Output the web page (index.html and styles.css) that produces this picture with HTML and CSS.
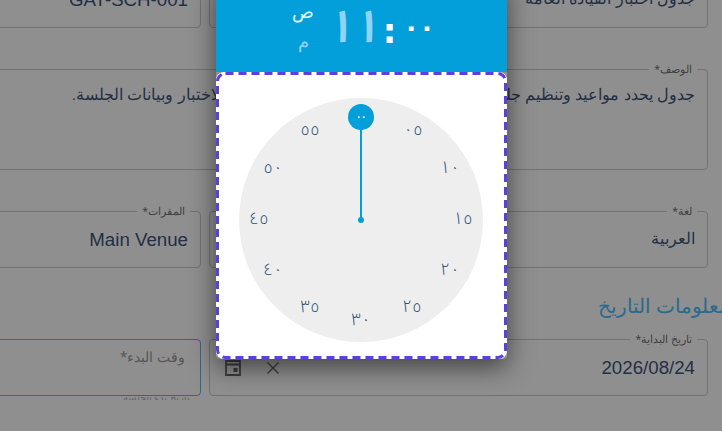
FILE: index.html
```html
<!DOCTYPE html>
<html lang="ar" dir="rtl">
<head>
<meta charset="utf-8">
<title>وقت البدء</title>
<link rel="stylesheet" href="styles.css">
</head>
<body>
<div class="page">
  <form class="form">
    <div class="field"><span class="value ar">جدول اختبار القيادة العامة</span></div>
    <div class="field"><span class="value">GAT-SCH-001</span></div>
    <div class="field wide desc">
      <span class="label">الوصف*</span>
      <span class="value ar">جدول يحدد مواعيد وتنظيم جلسات الاختبار لضمان حسن سير جيد لعملية الاختبار وبيانات الجلسة.</span>
    </div>
    <div class="field"><span class="label">لغة*</span><span class="value ar">العربية</span></div>
    <div class="field"><span class="label">المقرات*</span><span class="value">Main Venue</span></div>
    <h2 class="section wide">معلومات التاريخ</h2>
    <div class="field after-section">
      <span class="label">تاريخ البداية*</span><span class="value">2026/08/24</span>
      <span class="field-icons">
        <svg class="icon" viewBox="0 0 18 18" width="18" height="18"><path d="M2 2h14v14h-14z M2 5.5h14" fill="none" stroke="#3c3c3c" stroke-width="1.8"/><rect x="9.5" y="9" width="4" height="4" fill="#3c3c3c"/></svg>
        <svg class="icon" viewBox="0 0 18 18" width="18" height="18"><path d="M3.5 3.5l11 11M14.5 3.5l-11 11" fill="none" stroke="#3c3c3c" stroke-width="1.4"/></svg>
      </span>
    </div>
    <div class="field focus after-section"><span class="placeholder">وقت البدء*</span><span class="hint">تاريخ بدء الجلسة</span></div>
  </form>

  <div class="picker">
    <div class="picker-head">
      <div class="time"><span class="hours">١١</span><span class="sep">:</span><span class="mins">٠٠</span></div>
      <div class="ampm"><span class="on">ص</span><span class="off">م</span></div>
    </div>
    <div class="picker-body">
      <svg class="dashes" viewBox="0 0 291 287" width="291" height="287"><rect x="1.5" y="1.5" width="288" height="284" rx="8" fill="none" stroke="#5b3fe0" stroke-width="3" stroke-dasharray="8 5"/></svg>
      <div class="clock">
        <span class="hand"></span><span class="pivot"></span>
        <span class="knob">٠٠</span>
        <span class="num n05">٠٥</span>
        <span class="num n10">١٠</span>
        <span class="num n15">١٥</span>
        <span class="num n20">٢٠</span>
        <span class="num n25">٢٥</span>
        <span class="num n30">٣٠</span>
        <span class="num n35">٣٥</span>
        <span class="num n40">٤٠</span>
        <span class="num n45">٤٥</span>
        <span class="num n50">٥٠</span>
        <span class="num n55">٥٥</span>
      </div>
    </div>
  </div>
</div>
</body>
</html>
```
FILE: styles.css
```css
* { box-sizing: border-box; }
html, body { margin: 0; height: 100%; overflow: hidden; background: #8f8f8f; }
body { font-family: "Liberation Sans", Arial, sans-serif; color: #1f2f45; }

.page { position: relative; width: 722px; height: 431px; overflow: hidden; background: #8f8f8f; }

.form {
  position: absolute;
  top: -29px;
  right: 14px;
  width: 1015px;
  display: grid;
  grid-template-columns: 499px 499px;
  column-gap: 8px;
  row-gap: 41px;
  align-content: start;
}

.field {
  position: relative;
  height: 57px;
  border: 1px solid #727272;
  border-radius: 4px;
  display: flex;
  align-items: center;
  padding: 0 12px;
}
.after-section { margin-top: -11px; }
.wide { grid-column: 1 / -1; }
.desc { height: 101px; align-items: flex-start; padding-top: 15px; }
.value { font-size: 18.7px; line-height: 24px; white-space: nowrap; color: #1f2f45; }
.value.ar { font-size: 15.5px; margin-top: -2px; }
.label {
  position: absolute;
  top: -7px;
  right: 10px;
  padding: 0 5px;
  font-family: "Noto Sans", sans-serif;
  font-size: 10.5px;
  line-height: 12px;
  color: #3f3f3f;
  background: #8f8f8f;
}
.section {
  height: 0;
  margin: -15px -22px 15px 0;
  font-family: "Noto Sans", sans-serif;
  font-weight: 400;
  font-size: 19.5px;
  line-height: 24px;
  color: #2a6a8c;
}
.field-icons {
  position: absolute;
  left: 14px;
  top: 19px;
  display: flex;
  gap: 22px;
  direction: ltr;
}
.focus { border-color: #2a6a8c; }
.placeholder { font-family: "Noto Sans", sans-serif; font-size: 13.5px; color: #555; margin-top: -21px; padding-right: 3px; }
.hint {
  position: absolute;
  top: 57px;
  right: 10px;
  height: 3px;
  overflow: hidden;
  font-family: "Noto Sans", sans-serif;
  font-size: 10px;
  line-height: 0;
  color: #666;
}

.picker {
  position: absolute;
  left: 216px;
  top: -20px;
  width: 291px;
  direction: ltr;
  box-shadow: 0 8px 26px rgba(0,0,0,.55);
  border-radius: 0 0 4px 4px;
}
.picker-head {
  height: 92px;
  background: #039fdb;
  padding: 18px 0 0 113px;
  position: relative;
  display: flex;
}
.time { display: flex; align-items: center; height: 60px; font-family: "Noto Sans Arabic", "DejaVu Sans", sans-serif; color: #fff; }
.hours { font-size: 46px; font-weight: 600; line-height: 60px; color: #8fd4f4; letter-spacing: -15px; transform: skewX(-6deg); }
.sep { font-family: "DejaVu Sans", sans-serif; font-size: 34px; line-height: 60px; font-weight: 700; margin: 6px 7px 0 1px; }
.mins { font-family: "DejaVu Sans", sans-serif; font-size: 26px; font-weight: 700; line-height: 60px; letter-spacing: 0; margin-bottom: 2px; }
.ampm {
  position: absolute;
  left: 76px;
  top: 20px;
  display: flex;
  flex-direction: column;
  align-items: center;
  gap: 8px;
  font-family: "Noto Sans", sans-serif;
  font-size: 18px;
  line-height: 22px;
}
.on { color: #e6f7ff; }
.off { color: #8fd4f4; }

.picker-body {
  position: relative;
  height: 287px;
  background: #fff;
  border-radius: 8px;
  padding: 26px 0 0 23px;
}
.dashes { position: absolute; left: 0; top: 0; }
.clock { position: relative; width: 244px; height: 244px; border-radius: 50%; background: #eeeeee; }
.hand { position: absolute; left: 121px; top: 24px; width: 2px; height: 97px; background: #039fdb; }
.pivot { position: absolute; left: 119px; top: 119px; width: 6px; height: 6px; border-radius: 50%; background: #039fdb; }
.knob {
  position: absolute; left: 109px; top: 6px; width: 26px; height: 26px; border-radius: 50%;
  background: #039fdb; color: #fff; text-align: center; font-family: "Noto Sans", sans-serif; font-size: 10px; line-height: 24px; font-weight: 700;
}
.num {
  position: absolute; width: 30px; height: 20px; margin: -10px 0 0 -15px; text-align: center;
  font-family: "Noto Sans Arabic", "Noto Sans", sans-serif; font-size: 17px; font-weight: 300; line-height: 20px; letter-spacing: -1px; color: #2d5377;
}
.n05 { left: 174px; top: 32px; }
.n10 { left: 211px; top: 70px; }
.n15 { left: 224px; top: 121px; }
.n20 { left: 211px; top: 172px; }
.n25 { left: 173px; top: 209px; }
.n30 { left: 122px; top: 222px; }
.n35 { left: 71px; top: 209px; }
.n40 { left: 34px; top: 172px; }
.n45 { left: 20px; top: 121px; }
.n50 { left: 34px; top: 70px; }
.n55 { left: 71px; top: 32px; }
```
